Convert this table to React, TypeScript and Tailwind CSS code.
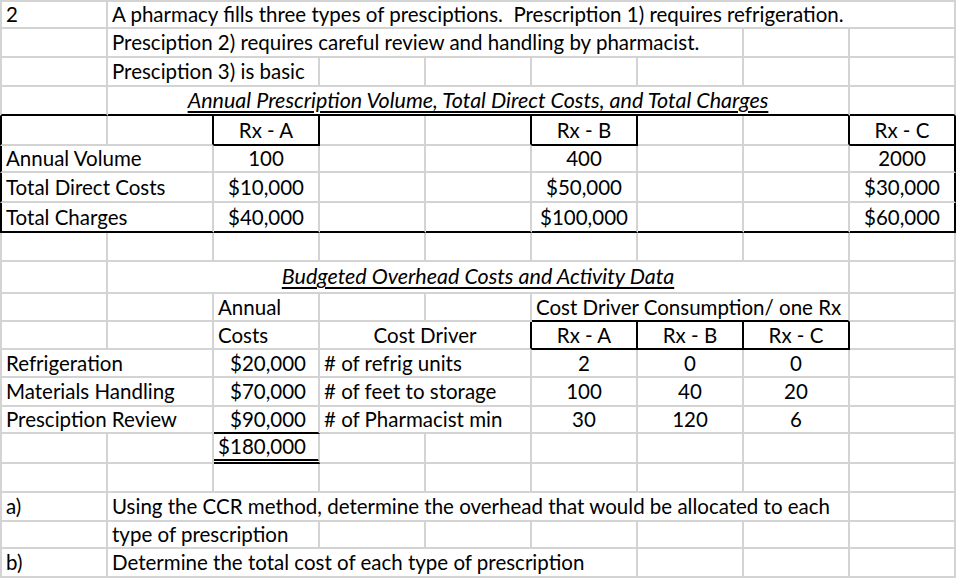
type Cell = {
  t?: string;
  span?: number;
  al?: "l" | "c" | "r";
  l?: "k";
  r?: "k";
  b?: "k" | "d";
  it?: boolean;
};

const SPAN: Record<number, string> = {
  1: "col-span-1",
  2: "col-span-2",
  3: "col-span-3",
  5: "col-span-5",
  6: "col-span-6",
  7: "col-span-7",
  8: "col-span-8",
};

const ALIGN = {
  l: "justify-start pl-[4px]",
  c: "justify-center",
  r: "justify-end pr-3",
};

const empty = (n: number): Cell[] => Array.from({ length: n }, () => ({}));

const rows: Cell[][] = [
  [{ t: "2" }, { t: "A pharmacy fills three types of presciptions.  Prescription 1) requires refrigeration.", span: 8 }],
  [{}, { t: "Presciption 2) requires careful review and handling by pharmacist.", span: 6 }, ...empty(2)],
  [{}, { t: "Presciption 3) is basic", span: 2 }, ...empty(6)],
  [
    { b: "k" },
    { t: "Annual Prescription Volume, Total Direct Costs, and Total Charges", span: 7, al: "c", it: true, b: "k" },
    { b: "k" },
  ],
  [
    { l: "k" },
    { r: "k" },
    { t: "Rx - A", al: "c", r: "k", b: "k" },
    {},
    { r: "k" },
    { t: "Rx - B", al: "c", r: "k", b: "k" },
    {},
    { r: "k" },
    { t: "Rx - C", al: "c", r: "k", b: "k" },
  ],
  [
    { t: "Annual Volume", span: 2, l: "k" },
    { t: "100", al: "c" },
    {},
    {},
    { t: "400", al: "c" },
    {},
    {},
    { t: "2000", al: "c", r: "k" },
  ],
  [
    { t: "Total Direct Costs", span: 2, l: "k" },
    { t: "$10,000", al: "c" },
    {},
    {},
    { t: "$50,000", al: "c" },
    {},
    {},
    { t: "$30,000", al: "c", r: "k" },
  ],
  [
    { t: "Total Charges", span: 2, l: "k", b: "k" },
    { t: "$40,000", al: "c", b: "k" },
    { b: "k" },
    { b: "k" },
    { t: "$100,000", al: "c", b: "k" },
    { b: "k" },
    { b: "k" },
    { t: "$60,000", al: "c", r: "k", b: "k" },
  ],
  empty(9),
  [{}, { t: "Budgeted Overhead Costs and Activity Data", span: 7, al: "c", it: true }, {}],
  [{}, {}, { t: "Annual" }, {}, {}, { t: "Cost Driver Consumption/ one Rx", span: 3, b: "k" }, {}],
  [
    {},
    {},
    { t: "Costs" },
    { t: "Cost Driver", span: 2, al: "c", r: "k" },
    { t: "Rx - A", al: "c", r: "k", b: "k" },
    { t: "Rx - B", al: "c", r: "k", b: "k" },
    { t: "Rx - C", al: "c", r: "k", b: "k" },
    {},
  ],
  [
    { t: "Refrigeration", span: 2 },
    { t: "$20,000", al: "r" },
    { t: "# of refrig units", span: 2 },
    { t: "2", al: "c" },
    { t: "0", al: "c" },
    { t: "0", al: "c" },
    {},
  ],
  [
    { t: "Materials Handling", span: 2 },
    { t: "$70,000", al: "r" },
    { t: "# of feet to storage", span: 2 },
    { t: "100", al: "c" },
    { t: "40", al: "c" },
    { t: "20", al: "c" },
    {},
  ],
  [
    { t: "Presciption Review", span: 2 },
    { t: "$90,000", al: "r", b: "k" },
    { t: "# of Pharmacist min", span: 2 },
    { t: "30", al: "c" },
    { t: "120", al: "c" },
    { t: "6", al: "c" },
    {},
  ],
  [{}, {}, { t: "$180,000", al: "r", b: "d" }, ...empty(6)],
  empty(9),
  [{ t: "a)" }, { t: "Using the CCR method, determine the overhead that would be allocated to each", span: 7 }, {}],
  [{}, { t: "type of prescription", span: 2 }, ...empty(6)],
  [{ t: "b)" }, { t: "Determine the total cost of each type of prescription", span: 5 }, ...empty(3)],
];

function SheetCell({ cell, first }: { cell: Cell; first: boolean }) {
  const span = SPAN[cell.span ?? 1];
  const align = ALIGN[cell.al ?? "l"];
  const left = first ? (cell.l === "k" ? "border-l-2 border-l-black" : "border-l-2 border-l-[#d3d3d3]") : "";
  const right = cell.r === "k" ? "border-r-black" : "border-r-[#d3d3d3]";
  const bottom =
    cell.b === "d"
      ? "border-b-[5px] [border-bottom-style:double] border-b-black"
      : cell.b === "k"
        ? "border-b-black"
        : "border-b-[#d3d3d3]";

  return (
    <div className={`${span} ${left} border-r-2 border-b-2 ${right} ${bottom} flex items-center ${align} min-w-0`}>
      {cell.t && (
        <span
          className={`whitespace-pre leading-none ${
            cell.it ? "italic underline underline-offset-[3px] text-[21.5px]" : ""
          }`}
        >
          {cell.t}
        </span>
      )}
    </div>
  );
}

export default function App() {
  return (
    <div
      className="w-[960px] h-[578px] overflow-hidden bg-white text-black text-[20.5px]"
      style={{ fontFamily: "Lato, 'Open Sans', sans-serif" }}
    >
      <div className="grid grid-cols-[108px_repeat(8,106px)] grid-rows-[27px_29px_29px_29px_30px_27px_30px_30px_29px_32px_28px_28px_28px_29px_27px_30px_29px_29px_27px_29px] border-t-2 border-t-[#d3d3d3] w-[956px]">
        {rows.map((row, i) =>
          row.map((cell, j) => <SheetCell key={`${i}-${j}`} cell={cell} first={j === 0} />)
        )}
      </div>
    </div>
  );
}
